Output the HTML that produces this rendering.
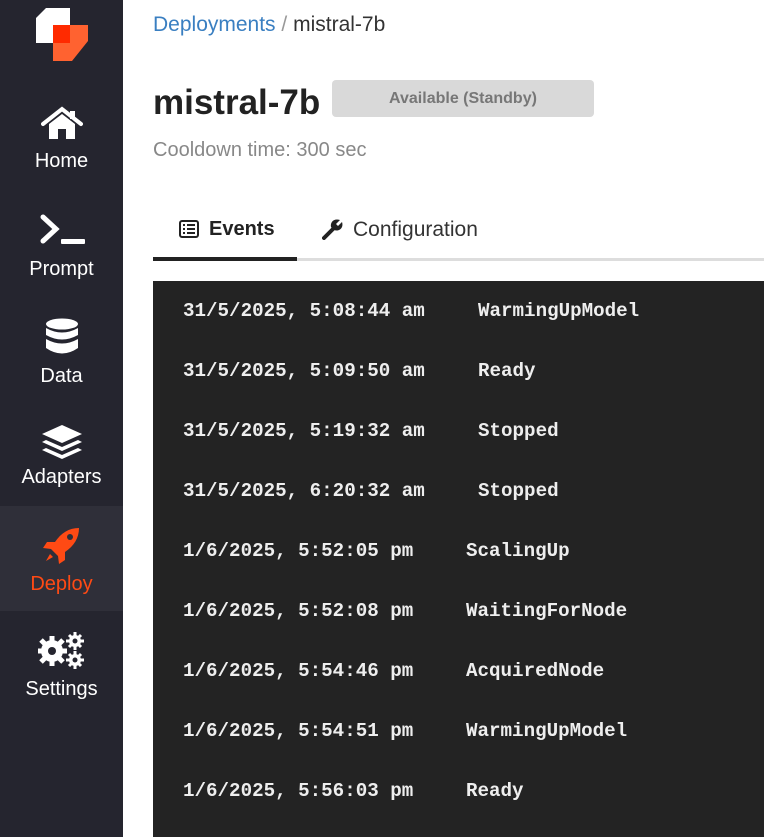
<!DOCTYPE html><html><head><style>
body{margin:0;width:764px;height:837px;overflow:hidden;background:#fff;font-family:"Liberation Sans",sans-serif;position:relative}
.sb{position:absolute;left:0;top:0;width:123px;height:837px;background:#25252f}
.it{position:absolute;left:0;width:123px;text-align:center;color:#fff;font-size:20px}
.it svg{display:block;margin:0 auto}
.ab{position:absolute}
.row{position:absolute;left:183px;font-family:"Liberation Mono",monospace;font-weight:bold;font-size:19.2px;color:#eee}
.row span{position:absolute;top:0;white-space:nowrap}
</style></head><body>
<div class="sb"></div>
<svg class="ab" style="left:36px;top:8px" width="53" height="54" viewBox="0 0 53 54">
<polygon points="0,10 10,0 34,0 34,35 0,35" fill="#fff"/>
<polygon points="17,17 52,17 52,33 36,53 17,53" fill="#ff6230"/>
<rect x="17" y="17" width="17" height="18" fill="#ff2a00"/>
</svg>
<div class="ab" style="left:0;top:506px;width:123px;height:105px;background:#2f2f39"></div>
<div class="it" style="top:106px"><svg width="42" height="34" viewBox="0 0 42 34"><path d="M2 18 L21 3 L40 18" stroke="#fff" stroke-width="4" fill="none" stroke-linecap="round"/><path d="M29 5h5v8h-5z" fill="#fff"/><path d="M8 18 L21 8 L34 18 V33 H25 V23 H17 V33 H8z" fill="#fff"/></svg><div style="margin-top:10px">Home</div></div>
<div class="it" style="top:213px"><svg width="46" height="34" viewBox="0 0 46 34"><path d="M4 4 L17 16 L4 28" stroke="#fff" stroke-width="5" fill="none" stroke-linecap="round"/><rect x="22" y="26" width="24" height="5" rx="1" fill="#fff"/></svg><div style="margin-top:11px">Prompt</div></div>
<div class="it" style="top:318px"><svg width="34" height="38" viewBox="0 0 34 38"><ellipse cx="17" cy="6" rx="16" ry="5.5" fill="#fff"/><path d="M1 10 q16 9 32 0 v7 q-16 9 -32 0z" fill="#fff"/><path d="M1 21 q16 9 32 0 v9 q-16 11 -32 0z" fill="#fff"/></svg><div style="margin-top:9px">Data</div></div>
<div class="it" style="top:423px"><svg width="44" height="40" viewBox="0 0 44 40"><path d="M22 2 L42 11 L22 20 L2 11z" fill="#fff"/><path d="M6 17 L22 24 L38 17 L42 19 L22 28 L2 19z" fill="#fff"/><path d="M6 25 L22 32 L38 25 L42 27 L22 36 L2 27z" fill="#fff"/></svg><div style="margin-top:3px">Adapters</div></div>
<div class="it" style="top:526px;color:#ff4a14"><svg width="38" height="38" viewBox="0 0 38 38"><path d="M36 2 C26 2 18 7 12 16 L4 16 L0 22 L8 23 L15 30 L16 38 L22 34 L22 26 C31 20 36 12 36 2z" fill="#ff4a14"/><circle cx="27" cy="11" r="3" fill="#2f2f39"/><path d="M7 28 L3 35 L10 31z" fill="#ff4a14"/></svg><div style="margin-top:9px">Deploy</div></div>
<div class="it" style="top:631px"><svg width="48" height="38" viewBox="0 0 48 38"><g fill="#fff"><circle cx="14" cy="20" r="11"/><g stroke="#fff" stroke-width="5"><path d="M14 5v30M-1 20h30M3 9l22 22M25 9L3 31"/></g><circle cx="37" cy="10" r="6"/><g stroke="#fff" stroke-width="3"><path d="M37 1v18M28 10h18M31 4l12 12M43 4L31 16"/></g><circle cx="37" cy="29" r="6"/><g stroke="#fff" stroke-width="3"><path d="M37 20v18M28 29h18M31 23l12 12M43 23L31 35"/></g></g><circle cx="14" cy="20" r="4" fill="#25252f"/><circle cx="37" cy="10" r="2.5" fill="#25252f"/><circle cx="37" cy="29" r="2.5" fill="#25252f"/></svg><div style="margin-top:9px">Settings</div></div>

<div class="ab" style="left:153px;top:13px;font-size:21px;color:#333"><span style="color:#3a7fc1">Deployments</span> <span style="color:#999">/</span> mistral-7b</div>
<div class="ab" style="left:153px;top:83px;font-size:35px;font-weight:bold;color:#222">mistral-7b</div>
<div class="ab" style="left:332px;top:80px;width:262px;height:37px;background:#d9d9d9;border-radius:4px;color:#777;font-weight:bold;font-size:16px;line-height:37px;text-align:center">Available (Standby)</div>
<div class="ab" style="left:153px;top:139px;font-size:20px;color:#888">Cooldown time: 300 sec</div>
<svg class="ab" style="left:179px;top:220px" width="20" height="18" viewBox="0 0 20 18"><rect x="1" y="1" width="18" height="16" rx="2" fill="none" stroke="#222" stroke-width="2"/><path d="M4 5h2M4 9h2M4 13h2M8 5h8M8 9h8M8 13h8" stroke="#222" stroke-width="2"/></svg>
<div class="ab" style="left:209px;top:218px;font-size:20px;font-weight:bold;color:#222">Events</div>
<svg class="ab" style="left:322px;top:218px" width="22" height="22" viewBox="0 0 22 22"><path d="M2 20 L11 11" stroke="#222" stroke-width="4" stroke-linecap="round"/><path d="M9 9 C8 4 12 0 18 2 L14 6 L16 8 L20 4 C22 10 17 14 12 12z" fill="#222"/></svg>
<div class="ab" style="left:353px;top:218px;font-size:21px;color:#333">Configuration</div>
<div class="ab" style="left:153px;top:258px;width:611px;height:3px;background:#ddd"></div>
<div class="ab" style="left:153px;top:257px;width:144px;height:4px;background:#222"></div>
<div class="ab" style="left:153px;top:281px;width:611px;height:556px;background:#232323"></div>
<div class="row" style="top:300px"><span>31/5/2025, 5:08:44 am</span><span style="left:295px">WarmingUpModel</span></div>
<div class="row" style="top:360px"><span>31/5/2025, 5:09:50 am</span><span style="left:295px">Ready</span></div>
<div class="row" style="top:420px"><span>31/5/2025, 5:19:32 am</span><span style="left:295px">Stopped</span></div>
<div class="row" style="top:480px"><span>31/5/2025, 6:20:32 am</span><span style="left:295px">Stopped</span></div>
<div class="row" style="top:540px"><span>1/6/2025, 5:52:05 pm</span><span style="left:283px">ScalingUp</span></div>
<div class="row" style="top:600px"><span>1/6/2025, 5:52:08 pm</span><span style="left:283px">WaitingForNode</span></div>
<div class="row" style="top:660px"><span>1/6/2025, 5:54:46 pm</span><span style="left:283px">AcquiredNode</span></div>
<div class="row" style="top:720px"><span>1/6/2025, 5:54:51 pm</span><span style="left:283px">WarmingUpModel</span></div>
<div class="row" style="top:780px"><span>1/6/2025, 5:56:03 pm</span><span style="left:283px">Ready</span></div>
</body></html>
